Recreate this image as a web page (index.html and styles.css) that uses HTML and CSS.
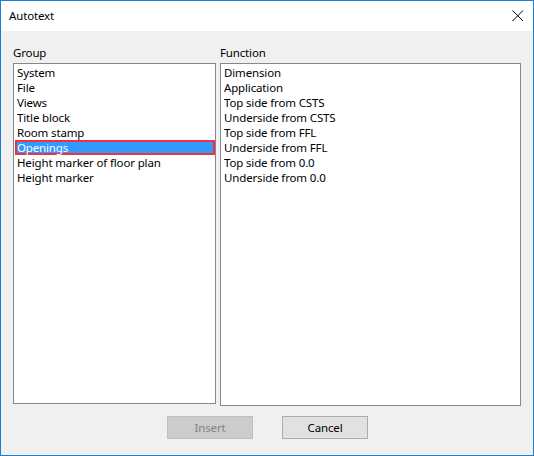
FILE: index.html
```html
<!DOCTYPE html>
<html>
<head>
<meta charset="utf-8">
<link rel="stylesheet" href="styles.css">
</head>
<body>
<div class="window">
  <div class="titlebar">
    <span class="title">Autotext</span>
    <svg class="close" width="12" height="12" viewBox="0 0 12 12"><path d="M0.5 0.5 L11 11 M11 0.5 L0.5 11" stroke="#000" stroke-width="1" fill="none"/></svg>
  </div>
  <div class="content">
    <div class="columns">
      <div class="col col-group">
        <div class="label">Group</div>
        <div class="listbox lb-group">
          <div class="item">System</div>
          <div class="item">File</div>
          <div class="item">Views</div>
          <div class="item">Title block</div>
          <div class="item">Room stamp</div>
          <div class="item selected">Openings</div>
          <div class="item">Height marker of floor plan</div>
          <div class="item">Height marker</div>
        </div>
      </div>
      <div class="col col-func">
        <div class="label">Function</div>
        <div class="listbox lb-func">
          <div class="item">Dimension</div>
          <div class="item">Application</div>
          <div class="item">Top side from CSTS</div>
          <div class="item">Underside from CSTS</div>
          <div class="item">Top side from FFL</div>
          <div class="item">Underside from FFL</div>
          <div class="item">Top side from 0.0</div>
          <div class="item">Underside from 0.0</div>
        </div>
      </div>
    </div>
    <div class="buttons">
      <div class="btn disabled">Insert</div>
      <div class="btn">Cancel</div>
    </div>
  </div>
</div>
</body>
</html>
```
FILE: styles.css
```css
* { box-sizing: border-box; }
html, body { margin: 0; padding: 0; }
body {
  font-family: "Noto Sans", "Open Sans", sans-serif;
  font-size: 11.5px;
  letter-spacing: -0.15px;
  color: #000;
}
.window {
  width: 534px;
  height: 456px;
  border: 1px solid #1a7fd4;
  background: #f0f0f0;
  display: flex;
  flex-direction: column;
}
.titlebar {
  height: 30px;
  background: #fff;
  display: flex;
  align-items: center;
  justify-content: space-between;
  padding: 0 9px 0 8px;
}
.title {
  line-height: 15px;
  margin-top: -1px;
}
.close {
  display: block;
  margin-top: -1px;
}
.content {
  flex: 1;
  padding: 14px 12px 0 12px;
  display: flex;
  flex-direction: column;
}
.columns {
  display: flex;
  gap: 4px;
  align-items: flex-start;
}
.col-group { width: 203px; }
.col-func { width: 301px; }
.label {
  line-height: 15px;
  height: 18px;
}
.listbox {
  background: #fff;
  border: 1px solid #828790;
  padding: 1px 1px 0 1px;
}
.lb-group { height: 341px; }
.lb-func { height: 343px; }
.item {
  height: 15px;
  line-height: 15px;
  padding-left: 2px;
  white-space: nowrap;
}
.item.selected {
  background: #3399ff;
  color: #fff;
  border: 2px solid #f0323c;
  line-height: 11px;
  padding-left: 0;
  margin-right: -1px;
}
.buttons {
  display: flex;
  justify-content: center;
  gap: 29px;
  margin-top: 10px;
  padding-left: 1px;
}
.btn {
  width: 86px;
  height: 23px;
  border: 1px solid #adadad;
  background: #e1e1e1;
  display: flex;
  align-items: center;
  justify-content: center;
  line-height: 15px;
}
.btn.disabled {
  background: #cccccc;
  border-color: #bfbfbf;
  color: #838383;
}
```
